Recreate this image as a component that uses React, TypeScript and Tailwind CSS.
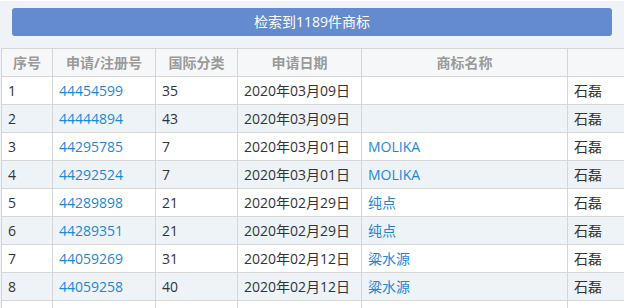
import React from 'react';

const rows = [
  { no: 1, reg: '44454599', cls: '35', date: '2020年03月09日', name: '', owner: '石磊' },
  { no: 2, reg: '44444894', cls: '43', date: '2020年03月09日', name: '', owner: '石磊' },
  { no: 3, reg: '44295785', cls: '7', date: '2020年03月01日', name: 'MOLIKA', owner: '石磊' },
  { no: 4, reg: '44292524', cls: '7', date: '2020年03月01日', name: 'MOLIKA', owner: '石磊' },
  { no: 5, reg: '44289898', cls: '21', date: '2020年02月29日', name: '纯点', owner: '石磊' },
  { no: 6, reg: '44289351', cls: '21', date: '2020年02月29日', name: '纯点', owner: '石磊' },
  { no: 7, reg: '44059269', cls: '31', date: '2020年02月12日', name: '粱水源', owner: '石磊' },
  { no: 8, reg: '44059258', cls: '40', date: '2020年02月12日', name: '粱水源', owner: '石磊' },
];

const headers = ['序号', '申请/注册号', '国际分类', '申请日期', '商标名称', ''];
const widths = ['w-[51px]', 'w-[103px]', 'w-[82px]', 'w-[124px]', 'w-[206px]', 'w-[120px]'];

const App: React.FC = () => {
  return (
    <div className="w-[633px] h-[308px] bg-white overflow-hidden" style={{ fontFamily: '"Open Sans", "Noto Sans CJK SC", sans-serif' }}>
      <div className="w-[624px] mt-px bg-[#eff3f7] overflow-hidden">
        <div className="px-3 pt-[7px]">
          <button className="w-full h-[28px] rounded-[3px] bg-[#658bcf] text-white text-[14px] leading-none">
            检索到1189件商标
          </button>
        </div>
        <table className="mt-3 ml-px border-collapse table-fixed w-[686px] text-[14px]">
          <colgroup>
            {widths.map((w, i) => <col key={i} className={w} />)}
          </colgroup>
          <thead>
            <tr className="bg-[#f6f7f8] h-[28px]">
              {headers.map((h, i) => (
                <th key={i} className="border border-[#d6d6d6] text-center font-bold text-[#9a9a9a] px-1.5 leading-none">{h}</th>
              ))}
            </tr>
          </thead>
          <tbody>
            {rows.map((r, i) => (
              <tr key={r.no} className={`h-[28px] ${i % 2 === 1 ? 'bg-[#eef3f8]' : 'bg-white'}`}>
                <td className="border border-[#d6d6d6] px-1.5 text-[#333] leading-none">{r.no}</td>
                <td className="border border-[#d6d6d6] px-1.5 text-[#1b88d4] leading-none">{r.reg}</td>
                <td className="border border-[#d6d6d6] px-1.5 text-[#333] leading-none">{r.cls}</td>
                <td className="border border-[#d6d6d6] px-1.5 text-[#333] leading-none">{r.date}</td>
                <td className="border border-[#d6d6d6] px-1.5 text-[#1b88d4] leading-none">{r.name}</td>
                <td className="border border-[#d6d6d6] px-1.5 text-[#333] leading-none">{r.owner}</td>
              </tr>
            ))}
            <tr className="h-[28px] bg-white">
              {widths.map((_, i) => (
                <td key={i} className="border border-[#d6d6d6]"></td>
              ))}
            </tr>
          </tbody>
        </table>
      </div>
    </div>
  );
};

export default App;
